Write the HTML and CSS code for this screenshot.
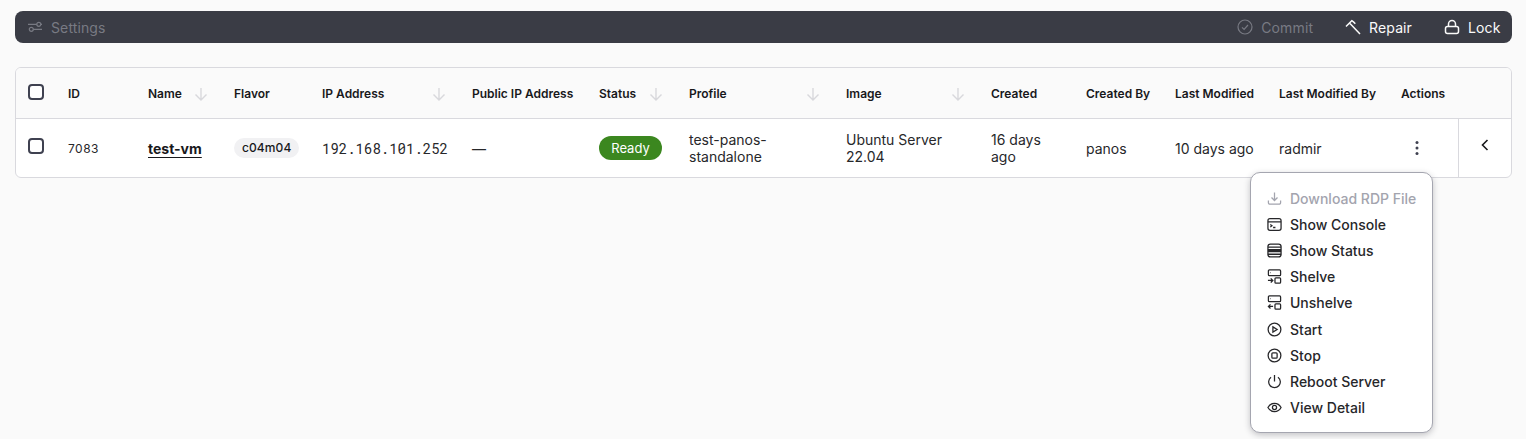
FILE: index.html
```html
<!DOCTYPE html>
<html lang="en">
<head>
<meta charset="utf-8">
<title>Instances</title>
<link rel="stylesheet" href="styles.css">
</head>
<body>
<div class="page">
  <div class="toolbar">
    <button class="tool disabled">
      <svg class="ticon" viewBox="0 0 16 16"><circle cx="4.300" cy="10.300" r="2"/><circle cx="11.800" cy="5.300" r="2"/><path d="M1 5.300h8.800M13.800 5.300h1.200M6.300 10.300h8.700"/></svg>
      Settings
    </button>
    <span class="spacer"></span>
    <button class="tool disabled">
      <svg class="ticon" viewBox="0 0 16 16"><circle cx="8" cy="8" r="7"/><path d="M5 8.300l2.100 2.100L11 6"/></svg>
      Commit
    </button>
    <button class="tool">
      <svg class="ticon strong" viewBox="0 0 16 16"><path d="M1 7.500L6.800 1.700c1.400.9 2.500 1.800 3.500 3M5 4.500l10 10.500"/></svg>
      Repair
    </button>
    <button class="tool">
      <svg class="ticon strong" viewBox="0 0 16 16"><rect x="1.500" y="7.500" width="13" height="7" rx="2"/><path d="M4.500 7.500V5a3.500 3.500 0 0 1 7 0v2.500"/></svg>
      Lock
    </button>
  </div>

  <div class="table-card">
    <table class="grid">
      <colgroup>
        <col class="c-check"><col class="c-id"><col class="c-name"><col class="c-flavor"><col class="c-ip"><col class="c-public"><col class="c-status"><col class="c-profile"><col class="c-image"><col class="c-created"><col class="c-by"><col class="c-mod"><col class="c-modby"><col class="c-actions"><col class="c-expand">
      </colgroup>
      <thead>
        <tr>
          <th><span class="box"></span></th>
          <th>ID</th>
          <th><span class="sort">Name <svg class="arrow" viewBox="0 0 14 14"><path d="M7 1v12M1.500 7.500L7 13l5.500-5.500"/></svg></span></th>
          <th>Flavor</th>
          <th><span class="sort">IP Address <svg class="arrow" viewBox="0 0 14 14"><path d="M7 1v12M1.500 7.500L7 13l5.500-5.500"/></svg></span></th>
          <th>Public IP Address</th>
          <th><span class="sort">Status <svg class="arrow" viewBox="0 0 14 14"><path d="M7 1v12M1.500 7.500L7 13l5.500-5.500"/></svg></span></th>
          <th><span class="sort">Profile <svg class="arrow" viewBox="0 0 14 14"><path d="M7 1v12M1.500 7.500L7 13l5.500-5.500"/></svg></span></th>
          <th><span class="sort">Image <svg class="arrow" viewBox="0 0 14 14"><path d="M7 1v12M1.500 7.500L7 13l5.500-5.500"/></svg></span></th>
          <th>Created</th>
          <th>Created By</th>
          <th>Last Modified</th>
          <th>Last Modified By</th>
          <th>Actions</th>
          <th></th>
        </tr>
      </thead>
      <tbody>
        <tr>
          <td class="wrap"><span class="box"></span></td>
          <td class="num-id">7083</td>
          <td><a class="vm-link">test-vm</a></td>
          <td class="wrap"><span class="flavor">c04m04</span></td>
          <td class="mono-ip">192.168.101.252</td>
          <td>—</td>
          <td class="wrap"><span class="status">Ready</span></td>
          <td class="wrap">test-panos-<br>standalone</td>
          <td class="wrap">Ubuntu Server<br>22.04</td>
          <td class="wrap">16 days<br>ago</td>
          <td>panos</td>
          <td>10 days ago</td>
          <td>radmir</td>
          <td class="kebab-cell">
            <svg class="kebab" viewBox="0 0 4 16"><circle cx="2" cy="2.500" r="1.500"/><circle cx="2" cy="8" r="1.500"/><circle cx="2" cy="13.500" r="1.500"/></svg>
          </td>
          <td class="expander">
            <svg class="chev" viewBox="0 0 10 14"><path d="M7.500 2L2.500 7l5 5"/></svg>
          </td>
        </tr>
      </tbody>
    </table>
  </div>

  <ul class="menu">
    <li class="item off"><svg class="micon" viewBox="0 0 16 16"><path d="M1.500 10v2.500a1.500 1.500 0 0 0 1.500 1.500h10a1.500 1.500 0 0 0 1.500-1.500V10M8 1.500V10M4.800 7L8 10.200 11.200 7"/></svg>Download RDP File</li>
    <li class="item"><svg class="micon" viewBox="0 0 16 16"><rect x="1" y="1.800" width="14" height="12.400" rx="2.200"/><path d="M1 5.200h14M3.500 8l1.800 1.400L3.500 10.800M6.500 11.200h2.500"/></svg>Show Console</li>
    <li class="item"><svg class="micon" viewBox="0 0 16 16"><rect x="1" y="1.200" width="14" height="13.600" rx="2.600"/><path d="M1 4.300h14M1 7h14M1 9.300h14M1 12h14M1 8h14"/></svg>Show Status</li>
    <li class="item"><svg class="micon" viewBox="0 0 16 16"><rect x="1.500" y="1" width="13" height="6" rx="1"/><rect x="8.500" y="9.500" width="6" height="5.500" rx="1"/><path d="M3.500 3.800h.5M1 12.200h5M4 10l2.200 2.200L4 14.400"/></svg>Shelve</li>
    <li class="item"><svg class="micon" viewBox="0 0 16 16"><rect x="1.500" y="1" width="13" height="6" rx="1"/><rect x="8.500" y="9.500" width="6" height="5.500" rx="1"/><path d="M3.500 3.800h.5M1.500 12.200h5M3.700 10L1.500 12.200l2.200 2.200"/></svg>Unshelve</li>
    <li class="item"><svg class="micon" viewBox="0 0 16 16"><circle cx="8" cy="8" r="6.800"/><path d="M6.300 5.200L10.800 8l-4.500 2.800z"/></svg>Start</li>
    <li class="item"><svg class="micon" viewBox="0 0 16 16"><circle cx="8" cy="8" r="6.800"/><rect x="5.200" y="5.200" width="5.600" height="5.600" rx="1"/></svg>Stop</li>
    <li class="item"><svg class="micon" viewBox="0 0 16 16"><path d="M8 1v7M4.300 3.400a6.200 6.200 0 1 0 7.400 0"/></svg>Reboot Server</li>
    <li class="item"><svg class="micon" viewBox="0 0 16 16"><path d="M1 8c1.600-3 4-4.400 7-4.400S13.400 5 15 8c-1.600 3-4 4.400-7 4.400S2.600 11 1 8z"/><circle cx="8" cy="8" r="2.200"/></svg>View Detail</li>
  </ul>
</div>
</body>
</html>
```
FILE: styles.css
```css
* { box-sizing: border-box; }
html, body { margin: 0; height: 100%; overflow: hidden; }
body {
  background: #fafafa;
  color: #18181b;
  font-family: Inter, "Liberation Sans", sans-serif;
  font-size: 14px;
}
.page { position: relative; padding: 11px 14px 0 15px; height: 100%; }

.toolbar {
  display: flex;
  align-items: center;
  height: 32px;
  background: #3a3c45;
  border-radius: 8px;
  padding: 0 11.500px 0 12px;
  gap: 32px;
}
.spacer { flex: 1; }
.tool {
  display: flex;
  align-items: center;
  gap: 8px;
  padding: 0;
  border: 0;
  background: none;
  color: #fafafa;
  font: 400 14px Inter, "Liberation Sans", sans-serif;
  letter-spacing: .12px;
}
.tool.disabled { color: #787a83; }
.ticon { width: 16px; height: 16px; fill: none; stroke: currentColor; stroke-width: 1.200; }
.ticon.strong { stroke-width: 1.500; }

.table-card {
  margin-top: 24px;
  border: 1px solid #d9d9de;
  border-radius: 6px;
  overflow: hidden;
  background: #fff;
}
.grid { width: 1495px; table-layout: fixed; border-collapse: collapse; }
.c-check { width: 40px; }
.c-id { width: 80px; }
.c-name { width: 86px; }
.c-flavor { width: 88px; }
.c-ip { width: 150px; }
.c-public { width: 127px; }
.c-status { width: 90px; }
.c-profile { width: 157px; }
.c-image { width: 145px; }
.c-created { width: 95px; }
.c-by { width: 89px; }
.c-mod { width: 104px; }
.c-modby { width: 122px; }
.c-actions { width: 69px; }
.c-expand { width: 53px; }

th, td { padding: 0 12px; text-align: left; vertical-align: middle; }
th {
  height: 50px;
  padding-top: 2px;
  background: #fafafa;
  border-bottom: 1px solid #d9d9de;
  font-size: 12px;
  font-weight: 600;
  white-space: nowrap;
}
td { height: 59px; padding-top: 2px; line-height: 17px; color: #27272a; }
td.wrap, td.expander { padding-top: 0; }

.box {
  display: block;
  width: 16px;
  height: 16px;
  border: 2px solid #3f4150;
  border-radius: 4px;
  background: #fff;
  position: relative;
  top: -2px;
}
.sort { display: flex; align-items: center; justify-content: space-between; padding-right: 2px; }
.arrow { width: 14px; height: 14px; fill: none; stroke: #d8d8dc; stroke-width: 1.400; flex: none; }

.num-id { font-size: 12px; letter-spacing: .5px; }
.mono-ip { font-family: "Roboto Mono", "Noto Sans Mono", "Liberation Mono", monospace; font-size: 14px; }
.vm-link {
  font-weight: 700;
  color: #18181b;
  text-decoration: underline;
  text-underline-offset: 3px;
}
.flavor {
  display: inline-block;
  padding: 0 8px;
  height: 20px;
  line-height: 20px;
  border-radius: 10px;
  background: #f1f1f3;
  font-size: 12px;
  font-weight: 500;
  letter-spacing: .1px;
  color: #18181b;
}
.status {
  display: inline-block;
  width: 63px;
  height: 24px;
  line-height: 24px;
  text-align: center;
  border-radius: 12px;
  background: #3b871f;
  color: #fff;
  font-size: 13px;
  font-weight: 400;
}
.kebab-cell { padding-left: 26px; }
.kebab { display: block; width: 4px; height: 16px; fill: #3f4150; position: relative; top: -1px; }
.expander { border-left: 1px solid #d9d9de; text-align: center; padding: 0; }
.chev { width: 10px; height: 14px; fill: none; stroke: #18181b; stroke-width: 1.600; position: relative; top: -1px; }

.menu {
  position: absolute;
  left: 1250px;
  top: 172px;
  width: 183px;
  height: 261px;
  margin: 0;
  padding: 12px 16px;
  list-style: none;
  background: #fff;
  border: 1px solid #a5a6b0;
  border-radius: 10px;
  box-shadow: 0 2px 6px rgba(30, 30, 45, .25);
}
.item {
  display: flex;
  align-items: center;
  gap: 8px;
  height: 26.200px;
  font-weight: 500;
  color: #27272a;
  white-space: nowrap;
}
.item.off { color: #a3a4ae; }
.micon { width: 15px; height: 15px; flex: none; fill: none; stroke: currentColor; stroke-width: 1.350; }
```
